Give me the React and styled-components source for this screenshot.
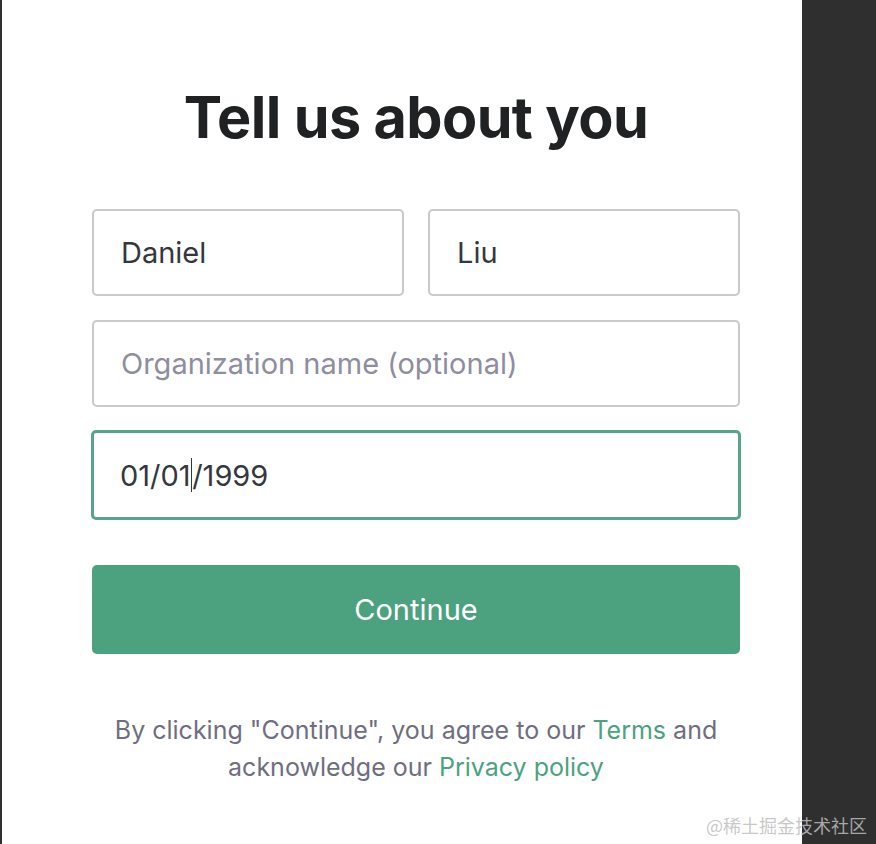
import styled, { createGlobalStyle } from 'styled-components';

const GlobalStyle = createGlobalStyle`
  html, body {
    margin: 0;
    padding: 0;
    background: #2f2f2f;
  }
  body {
    font-family: Inter, "Noto Sans", "Liberation Sans", sans-serif;
  }
`;

const Page = styled.div`
  position: relative;
  display: flex;
  height: 844px;
  padding-left: 2px;
`;

const Panel = styled.main`
  width: 800px;
  height: 100%;
  background: #fff;
  box-sizing: border-box;
  padding: 82px 62px 0 90px;
  display: flex;
  flex-direction: column;
  align-items: center;
`;

const Title = styled.h1`
  margin: 0 0 56px;
  font-size: 57.5px;
  font-weight: 700;
  letter-spacing: -0.6px;
  color: #202123;
  line-height: 71px;
`;

const Form = styled.div`
  width: 648px;
  display: flex;
  flex-direction: column;
  gap: 24px;
`;

const Row = styled.div`
  display: grid;
  grid-template-columns: 1fr 1fr;
  gap: 24px;
`;

const Field = styled.div`
  height: ${p => (p.$focused ? '90px' : '87px')};
  box-sizing: border-box;
  border: ${p => (p.$focused ? '3px solid #56a58a' : '2px solid #c9c9ce')};
  border-radius: 5px;
  padding: 0 ${p => (p.$focused ? '26px' : '27px')};
  display: flex;
  align-items: center;
  font-size: 29px;
  color: ${p => (p.$placeholder ? '#8e8ea0' : '#353740')};
  margin: ${p => (p.$focused ? '-1px -1px 0' : '0')};
`;

const Caret = styled.span`
  display: inline-block;
  width: 1.5px;
  height: 34px;
  background: #353740;
  vertical-align: -7px;
`;

const Button = styled.button`
  margin-top: 21px;
  height: 89px;
  border: none;
  border-radius: 5px;
  background: #4ca27f;
  color: #fff;
  font-family: inherit;
  font-size: 29px;
  cursor: pointer;
`;

const Footer = styled.p`
  margin: 58px 0 0;
  text-align: center;
  font-size: 25px;
  line-height: 37px;
  color: #6e6e80;
`;

const Link = styled.a`
  color: #4ca27f;
  text-decoration: none;
`;

const Watermark = styled.span`
  position: absolute;
  right: 9px;
  bottom: 6px;
  font-family: "Noto Sans CJK SC", sans-serif;
  font-size: 18px;
  color: rgba(190, 190, 190, 0.85);
`;

export default function App() {
  return (
    <>
      <GlobalStyle />
      <Page>
        <Panel>
          <Title>Tell us about you</Title>
          <Form>
            <Row>
              <Field>Daniel</Field>
              <Field>Liu</Field>
            </Row>
            <Field $placeholder>Organization name (optional)</Field>
            <Field $focused>
              01/01<Caret />/1999
            </Field>
            <Button>Continue</Button>
          </Form>
          <Footer>
            By clicking "Continue", you agree to our <Link href="#">Terms</Link> and
            <br />
            acknowledge our <Link href="#">Privacy policy</Link>
          </Footer>
        </Panel>
        <Watermark>@稀土掘金技术社区</Watermark>
      </Page>
    </>
  );
}
